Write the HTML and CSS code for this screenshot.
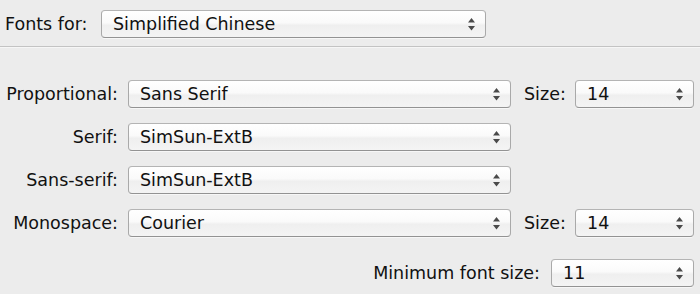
FILE: index.html
```html
<!DOCTYPE html>
<html lang="en">
<head>
    <meta charset="UTF-8">
    <title>Fonts</title>
    <link rel="stylesheet" href="styles.css">
</head>
<body>

    <div class="top">
        <span class="label top-label">Fonts for:</span>
        <div class="popup popup-script">
            <span>Simplified Chinese</span>
            <svg class="arrows" width="7" height="13" viewBox="0 0 7 13"><path d="M3.5 0 L7 4.5 L0 4.5 Z M0 8 L7 8 L3.5 12.5 Z"/></svg>
        </div>
    </div>

    <div class="sep"></div>

    <div class="fonts">
        <div class="row">
            <span class="label name">Proportional:</span>
            <div class="popup popup-font">
                <span>Sans Serif</span>
                <svg class="arrows" width="7" height="13" viewBox="0 0 7 13"><path d="M3.5 0 L7 4.5 L0 4.5 Z M0 8 L7 8 L3.5 12.5 Z"/></svg>
            </div>
            <span class="label size-label">Size:</span>
            <div class="popup popup-size">
                <span>14</span>
                <svg class="arrows" width="7" height="13" viewBox="0 0 7 13"><path d="M3.5 0 L7 4.5 L0 4.5 Z M0 8 L7 8 L3.5 12.5 Z"/></svg>
            </div>
        </div>
        <div class="row">
            <span class="label name">Serif:</span>
            <div class="popup popup-font">
                <span>SimSun-ExtB</span>
                <svg class="arrows" width="7" height="13" viewBox="0 0 7 13"><path d="M3.5 0 L7 4.5 L0 4.5 Z M0 8 L7 8 L3.5 12.5 Z"/></svg>
            </div>
        </div>
        <div class="row">
            <span class="label name">Sans-serif:</span>
            <div class="popup popup-font">
                <span>SimSun-ExtB</span>
                <svg class="arrows" width="7" height="13" viewBox="0 0 7 13"><path d="M3.5 0 L7 4.5 L0 4.5 Z M0 8 L7 8 L3.5 12.5 Z"/></svg>
            </div>
        </div>
        <div class="row">
            <span class="label name">Monospace:</span>
            <div class="popup popup-font">
                <span>Courier</span>
                <svg class="arrows" width="7" height="13" viewBox="0 0 7 13"><path d="M3.5 0 L7 4.5 L0 4.5 Z M0 8 L7 8 L3.5 12.5 Z"/></svg>
            </div>
            <span class="label size-label">Size:</span>
            <div class="popup popup-size">
                <span>14</span>
                <svg class="arrows" width="7" height="13" viewBox="0 0 7 13"><path d="M3.5 0 L7 4.5 L0 4.5 Z M0 8 L7 8 L3.5 12.5 Z"/></svg>
            </div>
        </div>
        <div class="row row-min">
            <span class="label">Minimum font size:</span>
            <div class="popup popup-min">
                <span>11</span>
                <svg class="arrows" width="7" height="13" viewBox="0 0 7 13"><path d="M3.5 0 L7 4.5 L0 4.5 Z M0 8 L7 8 L3.5 12.5 Z"/></svg>
            </div>
        </div>
    </div>

</body>
</html>
```

FILE: styles.css
```css
body {
    margin: 0;
    background-color: #ececec;
    font-family: 'DejaVu Sans', 'Lucida Grande', sans-serif;
    font-size: 17.5px;
    color: #111;
    height: 294px;
    overflow: hidden;
}

.top {
    display: flex;
    align-items: center;
    padding: 10px 0 0 5px;
}

.label {
    white-space: nowrap;
}

.top-label {
    width: 96px;
}

.popup {
    box-sizing: border-box;
    height: 28px;
    display: flex;
    align-items: center;
    justify-content: space-between;
    padding: 0 10px 0 11px;
    border: 1px solid #a9a9a9;
    border-top-color: #b4b4b4;
    border-bottom-color: #939393;
    border-radius: 4px;
    background: linear-gradient(#ffffff 0%, #fafafa 45%, #efefef 55%, #f4f4f4 100%);
    box-shadow: 0 1px 0 rgba(255, 255, 255, 0.6);
}

.arrows {
    fill: #4a4a4a;
    flex-shrink: 0;
}

.popup-script {
    width: 385px;
}

.sep {
    margin-top: 8px;
    height: 1px;
    background-color: #c3c3c3;
    border-bottom: 1px solid #f6f6f6;
}

.fonts {
    display: flex;
    flex-direction: column;
    gap: 15px;
    padding: 32px 6px 0 0;
}

.row {
    display: flex;
    align-items: center;
}

.name {
    width: 118px;
    text-align: right;
}

.popup-font {
    width: 383px;
    margin-left: 10px;
}

.size-label {
    margin-left: 13px;
}

.popup-size {
    width: 119px;
    margin-left: auto;
}

.row-min {
    justify-content: flex-end;
    margin-top: 7px;
}

.popup-min {
    width: 143px;
    margin-left: 11px;
}
```
